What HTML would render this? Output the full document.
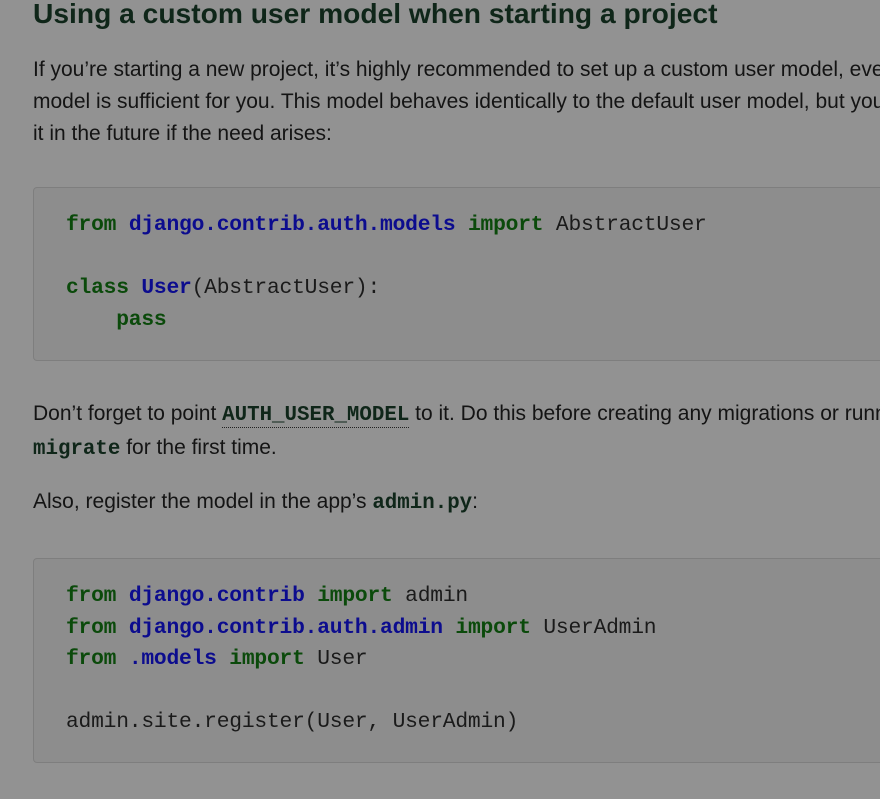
<!DOCTYPE html>
<html><head><meta charset="utf-8"><style>
body{margin:0;width:880px;height:799px;overflow:hidden;background:#929292;font-family:"Liberation Sans",sans-serif;color:#141414;position:relative}
h1{position:absolute;left:33px;top:-3px;margin:0;font-size:28.2px;font-weight:bold;color:#0f2619;white-space:nowrap}
p{position:absolute;left:33px;margin:0;font-size:21px;line-height:32px;white-space:nowrap}
.pre{position:absolute;left:33px;width:900px;background:#8d8d8d;border:1px solid #7e7e7e;border-radius:4px;box-sizing:border-box}
.code{position:absolute;left:66px;font-family:"Liberation Mono",monospace;font-size:21.3px;letter-spacing:-0.22px;line-height:31.5px;white-space:pre;color:#1a1a1a}
.k{color:#0b4a0b;font-weight:bold}.n{color:#0c0c8e;font-weight:bold}
code{font-family:"Liberation Mono",monospace;font-weight:bold;color:#0f2619;font-size:20.8px}
.u{border-bottom:1px dotted #222}
</style></head><body>
<h1>Using a custom user model when starting a project</h1>
<p style="top:54px">If you’re starting a new project, it’s highly recommended to set up a custom user model, even if the default User<br>model is sufficient for you. This model behaves identically to the default user model, but you’ll be able to customize<br>it in the future if the need arises:</p>
<div class="pre" style="top:187px;height:174px"></div>
<div class="code" style="top:210px"><span class="k">from</span> <span class="n">django.contrib.auth.models</span> <span class="k">import</span> AbstractUser

<span class="k">class</span> <span class="n">User</span>(AbstractUser):
    <span class="k">pass</span></div>
<p style="top:398px">Don’t forget to point <code class="u">AUTH_USER_MODEL</code> to it. Do this before creating any migrations or running manage.py<br><code>migrate</code> for the first time.</p>
<p style="top:486px">Also, register the model in the app’s <code>admin.py</code>:</p>
<div class="pre" style="top:558px;height:205px"></div>
<div class="code" style="top:581px"><span class="k">from</span> <span class="n">django.contrib</span> <span class="k">import</span> admin
<span class="k">from</span> <span class="n">django.contrib.auth.admin</span> <span class="k">import</span> UserAdmin
<span class="k">from</span> <span class="n">.models</span> <span class="k">import</span> User

admin.site.register(User, UserAdmin)</div>
</body></html>
